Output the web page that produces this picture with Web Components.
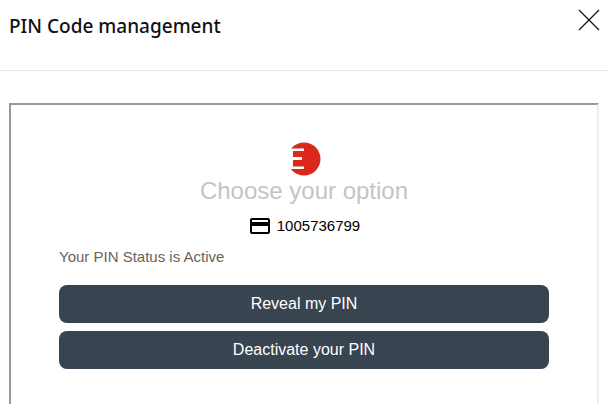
<!DOCTYPE html>
<html>
<head>
<meta charset="utf-8">
<title>PIN Code management</title>
<style>
    html, body { margin: 0; padding: 0; height: 100%; background: #fff; overflow: hidden; }
</style>
</head>
<body>
<pin-modal heading="PIN Code management">
    <pin-options card="1005736799" status="Your PIN Status is Active">
        <pin-button>Reveal my PIN</pin-button>
        <pin-button>Deactivate your PIN</pin-button>
    </pin-options>
</pin-modal>
<script>
(function () {
    class PinModal extends HTMLElement {
        connectedCallback() {
            this.attachShadow({ mode: 'open' });
            this.shadowRoot.innerHTML = `
                <style>
                    :host {
                        display: flex;
                        flex-direction: column;
                        height: 404px;
                        overflow: hidden;
                    }
                    header {
                        display: flex;
                        justify-content: space-between;
                        align-items: flex-start;
                        height: 70px;
                        flex: none;
                        border-bottom: 1px solid #e5e5e5;
                    }
                    h1 {
                        margin: 14px 0 0 9px;
                        color: #111;
                        font: 500 19px/24px "Noto Sans", sans-serif;
                    }
                    svg {
                        display: block;
                        margin: 9px 7px 0 0;
                    }
                    .frame {
                        flex: 1;
                        margin: 32px 8px 0 9px;
                        border: 2px solid;
                        border-color: #9a9a9a #eeeeee #eeeeee #9a9a9a;
                        min-height: 320px;
                    }
                </style>
                <header>
                    <h1>${this.getAttribute('heading')}</h1>
                    <svg width="22" height="22" viewBox="0 0 22 22" fill="none" stroke="#111" stroke-width="1.2">
                        <path d="M1 1 L21 21 M21 1 L1 21"/>
                    </svg>
                </header>
                <div class="frame"><slot></slot></div>
            `;
        }
    }

    class PinOptions extends HTMLElement {
        connectedCallback() {
            this.attachShadow({ mode: 'open' });
            this.shadowRoot.innerHTML = `
                <style>
                    :host {
                        display: block;
                        padding: 37px 48px 0;
                        font-family: "Liberation Sans", Arial, sans-serif;
                    }
                    .logo {
                        display: block;
                        margin: 0 auto;
                    }
                    h2 {
                        margin: 1px 0 0;
                        color: #c4c4c4;
                        font-size: 24px;
                        font-weight: 400;
                        line-height: 28px;
                        text-align: center;
                    }
                    .card {
                        display: flex;
                        justify-content: center;
                        align-items: center;
                        gap: 5px;
                        margin-top: 9px;
                        color: #000;
                        font-size: 15px;
                        line-height: 24px;
                    }
                    .card svg {
                        display: block;
                    }
                    .status {
                        margin: 9px 0 0;
                        color: #6b6258;
                        font-size: 15px;
                        line-height: 20px;
                    }
                    .actions {
                        display: grid;
                        gap: 8px;
                        margin-top: 18px;
                    }
                </style>
                <svg class="logo" width="34" height="34" viewBox="0 0 34 34">
                    <circle cx="17" cy="17" r="16.5" fill="#da291c"/>
                    <path d="M0 6.5 H17 V9 H6 V15 H15 V18 H6 V24.5 H17 V27 H0 Z" fill="#fff"/>
                </svg>
                <h2>Choose your option</h2>
                <div class="card">
                    <svg width="24" height="24" viewBox="0 0 24 24">
                        <path fill="#000" d="M20 4H4c-1.11 0-1.99.89-1.99 2L2 18c0 1.11.89 2 2 2h16c1.11 0 2-.89 2-2V6c0-1.11-.89-2-2-2zm0 14H4v-6h16v6zm0-10H4V6h16v2z"/>
                    </svg>
                    <span>${this.getAttribute('card')}</span>
                </div>
                <p class="status">${this.getAttribute('status')}</p>
                <div class="actions"><slot></slot></div>
            `;
        }
    }

    class PinButton extends HTMLElement {
        connectedCallback() {
            this.attachShadow({ mode: 'open' });
            this.shadowRoot.innerHTML = `
                <style>
                    :host { display: block; }
                    button {
                        display: block;
                        width: 100%;
                        height: 38px;
                        padding: 0;
                        border: 0;
                        border-radius: 8px;
                        background: #38444f;
                        color: #fff;
                        cursor: pointer;
                        font: 16px "Liberation Sans", Arial, sans-serif;
                    }
                </style>
                <button type="button"><slot></slot></button>
            `;
        }
    }

    customElements.define('pin-modal', PinModal);
    customElements.define('pin-options', PinOptions);
    customElements.define('pin-button', PinButton);
})();
</script>
</body>
</html>
